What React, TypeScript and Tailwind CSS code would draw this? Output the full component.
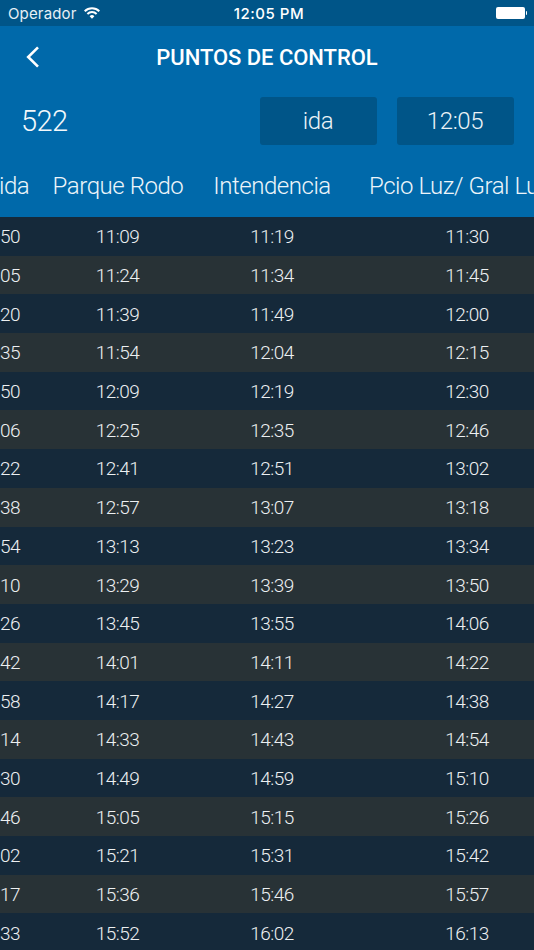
const start = ["50","05","20","35","50","06","22","38","54","10","26","42","58","14","30","46","02","17","33"];
const rodo = ["11:09","11:24","11:39","11:54","12:09","12:25","12:41","12:57","13:13","13:29","13:45","14:01","14:17","14:33","14:49","15:05","15:21","15:36","15:52"];
const inten = ["11:19","11:34","11:49","12:04","12:19","12:35","12:51","13:07","13:23","13:39","13:55","14:11","14:27","14:43","14:59","15:15","15:31","15:46","16:02"];
const luz = ["11:30","11:45","12:00","12:15","12:30","12:46","13:02","13:18","13:34","13:50","14:06","14:22","14:38","14:54","15:10","15:26","15:42","15:57","16:13"];

export default function App() {
  return (
    <div className="flex h-[950px] w-[534px] flex-col overflow-hidden bg-[#0069aa] font-['Roboto',sans-serif] text-white">
      <div className="grid h-[26px] shrink-0 grid-cols-3 items-center bg-[#005588] font-['Inter',sans-serif] text-[15px]">
        <div className="flex items-center gap-2 pt-[2px] pl-2 text-[#e6eff5]">
          <span className="tracking-[0.15px]">Operador</span>
          <svg className="-mt-[3px] -ml-px" width="16" height="12" viewBox="0 0 16 12" fill="none" stroke="white" strokeWidth="2">
            <path d="M.7 4.2a10.3 10.3 0 0 1 14.6 0M3.4 7a6.5 6.5 0 0 1 9.2 0" />
            <path d="M8 11.7 5.6 9.3a3.4 3.4 0 0 1 4.8 0z" fill="white" stroke="none" />
          </svg>
        </div>
        <span className="pt-[2px] pl-[4px] text-center font-medium tracking-[0.5px]">12:05 PM</span>
        <div className="flex items-center justify-end gap-px pr-[7px]">
          <div className="h-3 w-[29px] rounded-[2px] bg-white" />
          <div className="h-1 w-[1.5px] rounded-r-full bg-white" />
        </div>
      </div>
      <div className="grid h-[62px] shrink-0 grid-cols-[64px_1fr_64px] items-center">
        <svg className="ml-[26px]" width="14" height="22" viewBox="0 0 14 22" fill="none" stroke="white" strokeWidth="2.6">
          <path d="M12 1.3 2.2 11l9.8 9.7" />
        </svg>
        <h1 className="pt-px text-center text-[22px] font-medium tracking-[-0.05px]">PUNTOS DE CONTROL</h1>
      </div>
      <div className="flex h-[66px] shrink-0 items-center gap-5 pr-5 pl-[21px]">
        <span className="flex-1 pt-px text-[29px] font-light tracking-[-0.6px] text-[#f3f8fb]">522</span>
        <button className="h-12 w-[117px] rounded-[3px] bg-[#005588] pr-px text-2xl font-light tracking-[-0.4px] text-[#ecf3f7]">ida</button>
        <button className="h-12 w-[117px] rounded-[3px] bg-[#005588] pr-px text-2xl font-light tracking-[-0.4px] text-[#ecf3f7]">12:05</button>
      </div>
      <div className="grid h-[63px] shrink-0 grid-cols-[41px_154px_154px_235px] items-center text-[24px] font-light tracking-[-0.45px] whitespace-nowrap text-[#edf5fa]">
        <span className="-ml-px">ida</span><span className="text-center">Parque Rodo</span><span className="text-center">Intendencia</span><span className="text-center">Pcio Luz/ Gral Luna</span>
      </div>
      {start.map((s, i) => (
        <div key={i} className="grid h-[38.7px] shrink-0 grid-cols-[41px_153px_156px_234px] items-center bg-[#283236] pt-[2.5px] text-[19px] font-light tracking-[-0.55px] text-[#edf0f2] odd:bg-[#15293a]">
          <span>{s}</span><span className="text-center">{rodo[i]}</span><span className="text-center">{inten[i]}</span><span className="text-center">{luz[i]}</span>
        </div>
      ))}
    </div>
  );
}
